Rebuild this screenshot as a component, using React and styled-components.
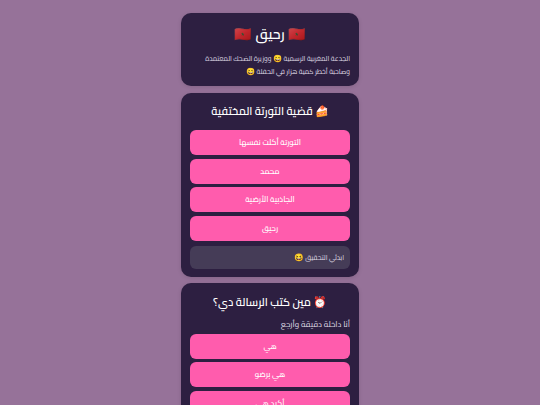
import React from "react";
import styled, { createGlobalStyle } from "styled-components";

const Global = createGlobalStyle`
  html, body { margin: 0; padding: 0; height: 405px; overflow: hidden; background: #967299; }
  body { font-family: "Cairo", "Tajawal", "Noto Sans Arabic", "DejaVu Sans", sans-serif; }
`;
const Page = styled.main`
  display: flex; flex-direction: column; align-items: center; gap: 6.3px;
  padding-top: 13px; direction: rtl;
`;
const Card = styled.section`
  width: 178px; box-sizing: border-box; background: #2d1f41; border-radius: 10px;
  padding: 9px 9px 8.25px; color: #fff; box-shadow: 0 1px 4px rgba(0,0,0,.12);
`;
const Title = styled.h1`
  margin: 0 0 7.2px; font-size: 14px; line-height: 24px; font-weight: 600; text-align: center;
  word-spacing: .5px;
`;
const Heading = styled.h2`
  margin: 0; padding-top: .5px; font-size: 11px; line-height: 18px; font-weight: 600; text-align: center;
`;
const Body = styled.p`
  margin: 0; font-size: 6.7px; line-height: 12.5px; font-weight: 500; color: #dcd6e0;
`;
const Question = styled.p`
  margin: 7.7px 0 0; font-size: 8px; line-height: 12px; font-weight: 500; color: #dcd6e0;
`;
const Answers = styled.div`
  display: flex; flex-direction: column; gap: 3.6px; margin-top: ${(p) => p.$top}px;
`;
const Answer = styled.button`
  height: 25px; border: 0; border-radius: 6px; background: #ff5cad; color: #fff;
  font: 600 7.8px/25px "Cairo", "Tajawal", "DejaVu Sans", sans-serif; padding: 0; text-align: center;
`;
const Note = styled.div`
  margin-top: 4.8px; height: 23px; border-radius: 6px; background: #453c57; color: #dcd6e0;
  font-size: 6.7px; font-weight: 500; line-height: 23px; padding: 0 6px;
`;
const Emoji = styled.span`
  font-family: "Noto Color Emoji", sans-serif; font-weight: 400;
  font-size: ${(p) => p.$scale || 1}em; line-height: 1;
`;

export default function App() {
  return (
    <Page>
      <Global />
      <Card>
        <Title><Emoji>🇲🇦</Emoji> رحيق <Emoji>🇲🇦</Emoji></Title>
        <Body>الجدعة المغربية الرسمية <Emoji $scale={1.1}>😄</Emoji> ووزيرة الضحك المعتمدة<br />وصاحبة أخطر كمية هزار في الحفلة <Emoji $scale={1.1}>😄</Emoji></Body>
      </Card>
      <Card>
        <Heading><Emoji>🍰</Emoji> قضية التورتة المختفية</Heading>
        <Answers $top={10}>
          <Answer>التورتة أكلت نفسها</Answer>
          <Answer>محمد</Answer>
          <Answer>الجاذبية الأرضية</Answer>
          <Answer>رحيق</Answer>
        </Answers>
        <Note>ابدئي التحقيق <Emoji $scale={1.15}>😆</Emoji></Note>
      </Card>
      <Card>
        <Heading><Emoji>⏰</Emoji> مين كتب الرسالة دي؟</Heading>
        <Question>أنا داخلة دقيقة وأرجع</Question>
        <Answers $top={3}>
          <Answer>هي</Answer>
          <Answer>هي برضو</Answer>
          <Answer>أكيد هي</Answer>
        </Answers>
      </Card>
    </Page>
  );
}
